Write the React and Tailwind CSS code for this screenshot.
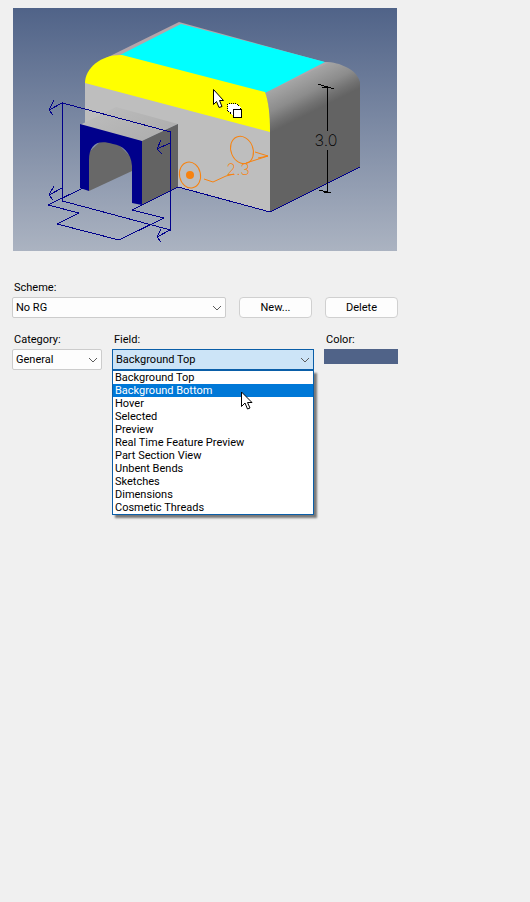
import { useState } from 'react';

const FIELDS = [
  'Background Top',
  'Background Bottom',
  'Hover',
  'Selected',
  'Preview',
  'Real Time Feature Preview',
  'Part Section View',
  'Unbent Bends',
  'Sketches',
  'Dimensions',
  'Cosmetic Threads',
];

function Chevron() {
  return (
    <svg
      viewBox="0 0 10 6"
      className="pointer-events-none absolute right-1 top-1/2 h-[6px] w-[10px] -translate-y-1/2"
      fill="none"
      stroke="#5c5c5c"
    >
      <path d="M1 1 L5 5 L9 1" />
    </svg>
  );
}

function Select({ id, label, value, options, onChange, open, className, children }) {
  return (
    <div className={className}>
      <label htmlFor={id} className="mb-px block pl-[2px]">
        {label}
      </label>
      <div className="relative">
        <select
          id={id}
          value={value}
          onChange={(e) => onChange(e.target.value)}
          className={`block h-[21px] w-full appearance-none border pl-[3px] pr-4 leading-[19px] outline-none ${
            open ? 'border-[#0a5ea8] bg-[#cce4f7]' : 'rounded-xs border-[#cccccc] bg-[#fdfdfd]'
          }`}
        >
          {options.map((o) => (
            <option key={o}>{o}</option>
          ))}
        </select>
        <Chevron />
        {children}
      </div>
    </div>
  );
}

function Button({ children }) {
  return (
    <button
      type="button"
      className="h-[21px] w-[73px] rounded-[4px] border border-[#d0d0d0] bg-[#fdfdfd] leading-[19px] hover:bg-[#e5f1fb]"
    >
      {children}
    </button>
  );
}

// Sample part shown with the colours of the active scheme
function Preview() {
  return (
    <svg viewBox="13 8 384 243" className="block w-full" role="img" aria-label="Scheme preview">
      <defs>
        <linearGradient id="sky" x1="0" y1="0" x2="0" y2="1">
          <stop offset="0" stopColor="#506388" />
          <stop offset="1" stopColor="#abb3c1" />
        </linearGradient>
        <linearGradient id="round" gradientUnits="userSpaceOnUse" x1="265" y1="93" x2="282" y2="127">
          <stop offset="0" stopColor="#a6a6a6" />
          <stop offset="0.2" stopColor="#9c9c9c" />
          <stop offset="0.5" stopColor="#8c8c8c" />
          <stop offset="0.8" stopColor="#717171" />
          <stop offset="1" stopColor="#636363" />
        </linearGradient>
        <linearGradient id="ledge" gradientUnits="userSpaceOnUse" x1="120" y1="104" x2="140" y2="141">
          <stop offset="0" stopColor="#bababa" />
          <stop offset="1" stopColor="#b0b0b0" />
        </linearGradient>
      </defs>
      <rect x="13" y="8" width="384" height="243" fill="url(#sky)" />

      {/* Main block */}
      <path d="M85 82 L270 130 V212 L178 187 V124 L142 141 L85 126 Z" fill="#bebebe" />
      <path
        d="M265 93 L324 62 C334 62 340 64 346 67 C353 70 358 75 360 82 V167 L270 212 V131 Q270 105 265 93 Z"
        fill="url(#round)"
      />
      <path d="M106 58 L179 22 L328 63 L265 93 L120 56 Z" fill="#b3a5aa" />
      <path d="M120 55 L181 24 L325 62 L265 93 Z" fill="#00ffff" />
      <path d="M85 83 C85 67 103 54 122 55 L265 92 Q270 105 270 132 Z" fill="#ffff00" />

      {/* Arched boss */}
      <path d="M80 125 L116 107 L178 124 L142 141 Z" fill="url(#ledge)" />
      <path d="M142 141 L178 124 V187 L142 205 Z" fill="#636363" />
      <path d="M89 191 L132 171 V158 L118 144 L102 140 L89 152 Z" fill="#686868" />
      <path
        d="M80 124 L142 141 V205 L132 203 V166 C131 152 122 145 113 144 C98 139 89 144 89 160 V191 L80 188 Z"
        fill="#00008b"
      />

      {/* Sketch and section plane */}
      <g fill="none" stroke="#00008b" shapeRendering="crispEdges">
        <path d="M83 188 L48 205 L79 213 L57 224 L119 240 L164 218 L132 210 L178 187 L270 212 L360 167" />
        <path d="M62.5 103 L170.5 132 V230 L62.5 201 Z" />
        <path d="M62 103 L49 110 M54 100 L49 110 L53 115" />
        <path d="M62 188 L49 195 M54 186 L49 195 L53 200" />
        <path d="M170 143 L157 149 M161 140 L157 149 L162 154" />
        <path d="M170 230 L157 237 M161 229 L157 237 L161 242" />
      </g>

      {/* Selected hole dimension */}
      <g fill="none" stroke="#f7820f">
        <ellipse cx="190" cy="175" rx="10.5" ry="13" transform="rotate(-12 190 175)" />
        <ellipse cx="242" cy="150" rx="11" ry="14" transform="rotate(-22 242 150)" />
        <path d="M204 179 L213 182 L226 176 L234 174 M246 163 L268 156 L255 152 M268 156 L258 158" />
      </g>
      <circle cx="190" cy="175" r="4" fill="#f7820f" />
      <text x="238" y="175" fontSize="16" fontWeight="200" textAnchor="middle" fill="#f7820f" className="font-[Inter,sans-serif]">
        2.3
      </text>

      {/* Height dimension */}
      <g fill="none" stroke="black" shapeRendering="crispEdges">
        <path d="M327.5 87 V131 M327.5 150 V193" />
        <path d="M318 84 L334 89 M322 87 H329 M319 190 L331 193 M324 192 H331" />
      </g>
      <text x="326" y="146" fontSize="16" fontWeight="200" textAnchor="middle" className="font-[Inter,sans-serif]">
        3.0
      </text>

      {/* Face picking cursor */}
      <path
        d="M213.5 89.5 V104.5 L216.5 101.5 L219 107.5 L222 106.5 L219.5 100.5 H223.5 Z"
        fill="white"
        stroke="black"
      />
      <g shapeRendering="crispEdges" fill="white" stroke="black">
        <path
          d="M227.5 103.5 H236.5 L240.5 107.5 V113.5 L233.5 115.5 L227.5 110.5 Z"
          strokeDasharray="1 1"
          strokeDashoffset="0.5"
        />
        <rect x="233.5" y="109.5" width="8" height="8" />
      </g>
    </svg>
  );
}

export default function App() {
  const [scheme, setScheme] = useState('No RG');
  const [category, setCategory] = useState('General');
  const [field, setField] = useState('Background Top');
  const [hovered, setHovered] = useState('Background Bottom');
  const [color, setColor] = useState('#506388');

  return (
    <main className="min-h-screen bg-[#f0f0f0] font-[Roboto,sans-serif] text-[11px] leading-4 text-black">
      <div className="max-w-[398px] pl-3 pt-2">
        <div className="px-px">
          <Preview />
        </div>

        <div className="mt-[29px] flex items-end gap-[13px]">
          <Select
            id="scheme"
            label="Scheme:"
            value={scheme}
            onChange={setScheme}
            options={['No RG']}
            className="flex-1"
          />
          <Button>New...</Button>
          <Button>Delete</Button>
        </div>

        <div className="mt-[14px] flex gap-[10px]">
          <Select
            id="category"
            label="Category:"
            value={category}
            onChange={setCategory}
            options={['General']}
            className="w-[90px]"
          />
          <Select
            id="field"
            label="Field:"
            value={field}
            onChange={setField}
            options={FIELDS}
            className="flex-1"
            open
          >
            <ul
              role="listbox"
              aria-label="Field"
              className="absolute inset-x-0 top-full border border-[#0a5ea8] bg-white leading-[13px] shadow-[3px_3px_2px_rgba(0,0,0,0.5)]"
            >
              {FIELDS.map((f) => (
                <li
                  key={f}
                  role="option"
                  aria-selected={f === field}
                  onMouseEnter={() => setHovered(f)}
                  onClick={() => setField(f)}
                  className={`px-[2px] ${f === hovered ? 'bg-[#0078d7] text-white' : ''}`}
                >
                  {f}
                </li>
              ))}
            </ul>
            <svg
              viewBox="0 0 12 19"
              className="pointer-events-none absolute left-[129px] top-[42px] h-[19px] w-3"
              fill="white"
              stroke="black"
            >
              <path d="M0.5 1 V15.5 L4 12 L6.5 18 L9 17 L6.5 11.5 H11 Z" />
            </svg>
          </Select>
          <div className="w-[74px]">
            <label htmlFor="color" className="mb-px block pl-[2px]">
              Color:
            </label>
            <input
              id="color"
              type="color"
              value={color}
              onChange={(e) => setColor(e.target.value)}
              className="block h-[15px] w-full appearance-none [&::-webkit-color-swatch-wrapper]:p-0 [&::-webkit-color-swatch]:rounded-none [&::-webkit-color-swatch]:border-0"
            />
          </div>
        </div>
      </div>
    </main>
  );
}
